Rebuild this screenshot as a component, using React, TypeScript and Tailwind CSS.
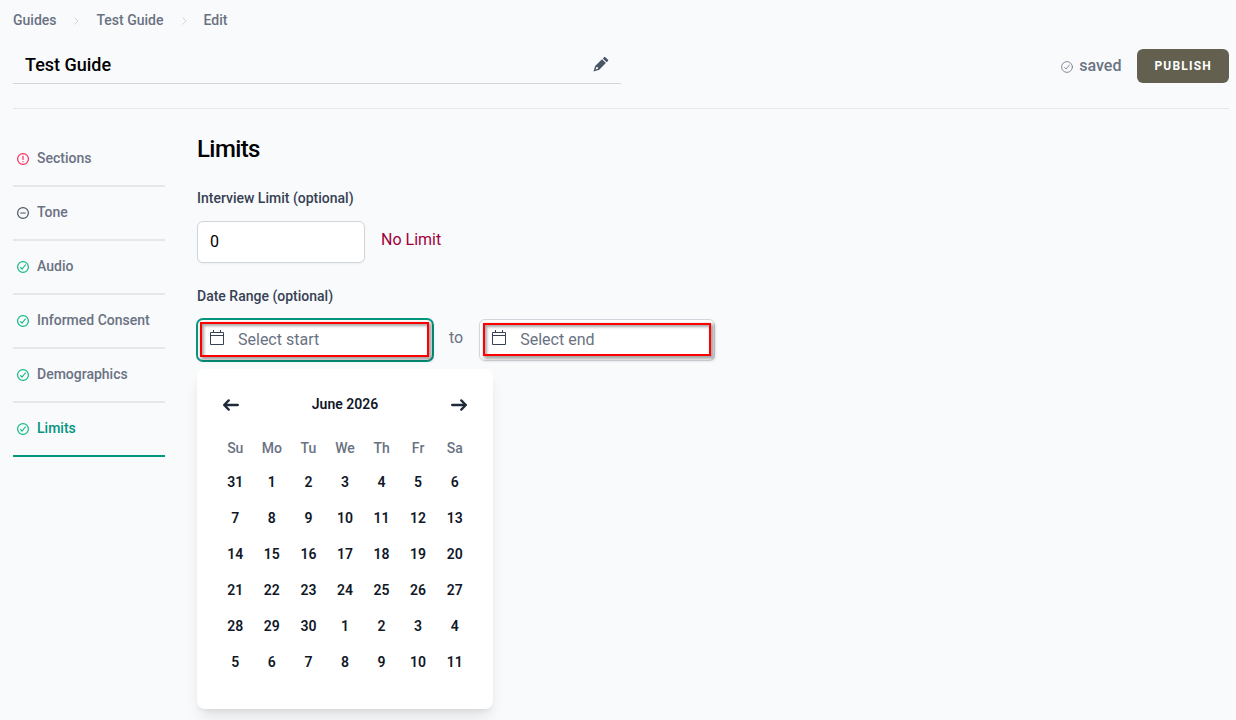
import { Fragment, useState } from 'react'

type Status = 'error' | 'empty' | 'done'

type Step = {
  label: string
  status: Status
}

const crumbs = ['Guides', 'Test Guide', 'Edit']

const steps: Step[] = [
  { label: 'Sections', status: 'error' },
  { label: 'Tone', status: 'empty' },
  { label: 'Audio', status: 'done' },
  { label: 'Informed Consent', status: 'done' },
  { label: 'Demographics', status: 'done' },
  { label: 'Limits', status: 'done' },
]

const weekdays = ['Su', 'Mo', 'Tu', 'We', 'Th', 'Fr', 'Sa']

const weeks = [
  [31, 1, 2, 3, 4, 5, 6],
  [7, 8, 9, 10, 11, 12, 13],
  [14, 15, 16, 17, 18, 19, 20],
  [21, 22, 23, 24, 25, 26, 27],
  [28, 29, 30, 1, 2, 3, 4],
  [5, 6, 7, 8, 9, 10, 11],
]

const statusColor: Record<Status, string> = {
  error: 'text-[#fb2c5c]',
  empty: 'text-gray-600',
  done: 'text-[#10b981]',
}

function StatusIcon({ status, thin }: { status: Status; thin?: boolean }) {
  return (
    <svg
      className="size-3 shrink-0"
      viewBox="0 0 12 12"
      fill="none"
      stroke="currentColor"
      strokeWidth={thin ? 0.8 : 1.2}
      strokeLinecap="round"
      strokeLinejoin="round"
      aria-hidden="true"
    >
      <circle cx="6" cy="6" r="5.4" />
      {status === 'error' && <path d="M6 3.2v3.2M6 8.6v.1" />}
      {status === 'empty' && <path d="M3.7 6h4.6" />}
      {status === 'done' && <path d="M3.6 6.6l1.5 1.4 3.2-4" />}
    </svg>
  )
}

function PencilIcon() {
  return (
    <svg className="size-4" viewBox="0 0 16 16" fill="currentColor" aria-hidden="true">
      <path d="M11.1 1.2a.9.9 0 0 1 1.3 0l2.6 2.6a.9.9 0 0 1 0 1.3l-1.3 1.2-3.9-3.9z" />
      <path
        fillRule="evenodd"
        d="M9 3.2l3.9 3.9-6.4 6.3c-.3.3-.6.5-1 .6L.5 15.5 2 10.6c.1-.4.3-.7.6-1zM3.4 10.8l-.8 2.6 2.6-.8-.2-1.3-1.1-.1z"
      />
    </svg>
  )
}

function CalendarIcon() {
  return (
    <svg
      className="h-[15px] w-3.5"
      viewBox="0 0 14 15"
      fill="none"
      stroke="currentColor"
      aria-hidden="true"
    >
      <path d="M.5 2.5h13v12H.5zM.5 5.5h13M3.5 0v3M10.5 0v3" />
    </svg>
  )
}

function DateInput({ id, label, active }: { id: string; label: string; active?: boolean }) {
  return (
    <div className="relative w-[236px]">
      <span className="absolute left-[13px] top-[11px] text-gray-700">
        <CalendarIcon />
      </span>
      <input
        id={id}
        type="text"
        aria-label={label}
        placeholder={label}
        className={`h-[42px] w-full rounded-md border bg-white pb-0.5 pl-10 pr-3 text-base placeholder:text-gray-500 shadow-xs outline-none ${
          active ? 'border-[#04957c] ring-1 ring-[#04957c]' : 'border-gray-300'
        }`}
      />
      {/* Highlight frame */}
      <div
        className={`pointer-events-none absolute right-1 border-2 border-[#ff0000] shadow-[2px_2px_3px_1px_rgba(0,0,0,0.35),inset_2px_2px_3px_rgba(0,0,0,0.35)] ${
          active ? 'left-[3px] top-[3px] h-[35px]' : 'left-1 top-1 h-[33px]'
        }`}
      />
    </div>
  )
}

function Arrow({ flip }: { flip?: boolean }) {
  return (
    <svg className="size-4" viewBox="0 0 14 10" fill="none" aria-hidden="true">
      <path
        d={flip ? 'M1 5h12m0 0L9 1m4 4L9 9' : 'M13 5H1m0 0 4 4M1 5l4-4'}
        stroke="currentColor"
        strokeWidth="2"
        strokeLinecap="round"
        strokeLinejoin="round"
      />
    </svg>
  )
}

function DatePicker() {
  return (
    <div className="absolute left-0 top-full mt-2 w-[296px] rounded-lg bg-white px-5 pb-[29px] pt-5 shadow-lg">
      <div className="flex h-8 items-center justify-between px-1.5 text-gray-800">
        <button type="button" aria-label="Previous month">
          <Arrow />
        </button>
        <span className="pb-0.5 text-sm font-semibold text-gray-900">June 2026</span>
        <button type="button" aria-label="Next month">
          <Arrow flip />
        </button>
      </div>
      <table className="mt-[11px] w-full table-fixed text-center text-sm">
        <thead>
          <tr className="h-8 text-gray-500">
            {weekdays.map((day) => (
              <th key={day} className="p-0 font-medium">
                {day}
              </th>
            ))}
          </tr>
        </thead>
        <tbody>
          {weeks.map((week, i) => (
            <tr key={i} className="h-9">
              {week.map((day) => (
                <td key={day} className="p-0">
                  <button type="button" className="h-9 w-full font-semibold text-gray-900">
                    {day}
                  </button>
                </td>
              ))}
            </tr>
          ))}
        </tbody>
      </table>
    </div>
  )
}

export default function App() {
  const [title, setTitle] = useState('Test Guide')
  const [limit, setLimit] = useState('0')

  return (
    <div className="min-h-screen bg-[#f9fafc] pl-[13px] pr-[7px] pt-2.5 font-[Roboto,sans-serif] text-black">
      {/* Breadcrumbs */}
      <nav className="flex items-center text-sm font-medium text-gray-500">
        {crumbs.map((crumb, i) => (
          <Fragment key={crumb}>
            {i > 0 && (
              <svg
                className="mx-4 mt-0.5 size-2 text-gray-300"
                viewBox="0 0 8 8"
                fill="none"
                stroke="currentColor"
                aria-hidden="true"
              >
                <path d="M2.5.5L6 4 2.5 7.5" />
              </svg>
            )}
            <a href="#">{crumb}</a>
          </Fragment>
        ))}
      </nav>

      {/* Header */}
      <header className="mt-[18px] flex items-center justify-between border-b border-gray-200 pb-6">
        <div className="flex h-9 w-1/2 items-center border-b border-gray-300 pb-0.5 pl-3 pr-3">
          <input
            type="text"
            aria-label="Guide title"
            value={title}
            onChange={(e) => setTitle(e.target.value)}
            className="min-w-0 flex-1 bg-transparent text-lg font-medium outline-none"
          />
          <button type="button" aria-label="Rename guide" className="pb-0.5 text-gray-600">
            <PencilIcon />
          </button>
        </div>
        <div className="flex items-center gap-4">
          <div className="flex items-center gap-1.5 font-medium text-gray-500">
            <span className="pt-0.5">
              <StatusIcon status="done" thin />
            </span>
            <span>saved</span>
          </div>
          <button
            type="button"
            className="rounded-md bg-[#636050] px-[17px] py-[9px] text-xs font-bold uppercase tracking-widest text-white"
          >
            Publish
          </button>
        </div>
      </header>

      <div className="mt-6 flex items-start gap-8">
        {/* Steps */}
        <nav className="w-1/8 shrink-0">
          {steps.map((step) => (
            <a
              key={step.label}
              href="#"
              className={`flex h-[54px] items-center gap-2 border-b-2 pl-1 text-sm font-medium ${
                step.label === 'Limits'
                  ? 'border-[#04957c] text-[#04957c]'
                  : 'border-gray-200 text-gray-500'
              }`}
            >
              <span className={statusColor[step.status]}>
                <StatusIcon status={step.status} />
              </span>
              <span className="pb-0.5">{step.label}</span>
            </a>
          ))}
        </nav>

        {/* Limits form */}
        <main className="flex-1">
          <h1 className="text-2xl font-medium tracking-tight">Limits</h1>

          <label htmlFor="limit" className="mt-[23px] block text-sm font-medium text-gray-700">
            Interview Limit (optional)
          </label>
          <div className="mt-[13px] flex items-start gap-4">
            <input
              id="limit"
              type="text"
              inputMode="numeric"
              value={limit}
              onChange={(e) => setLimit(e.target.value)}
              className="h-[42px] w-[168px] rounded-md border border-gray-300 bg-white px-3 pb-0.5 text-base shadow-xs"
            />
            <span className="pt-[7px] text-[#a0003a]">No Limit</span>
          </div>

          <label htmlFor="start" className="mt-[23px] block text-sm font-medium text-gray-700">
            Date Range (optional)
          </label>
          <div className="relative mt-[13px] flex items-start gap-4">
            <DateInput id="start" label="Select start" active />
            <span className="pt-[7px] text-gray-500">to</span>
            <DateInput id="end" label="Select end" />
            <DatePicker />
          </div>
        </main>
      </div>
    </div>
  )
}
